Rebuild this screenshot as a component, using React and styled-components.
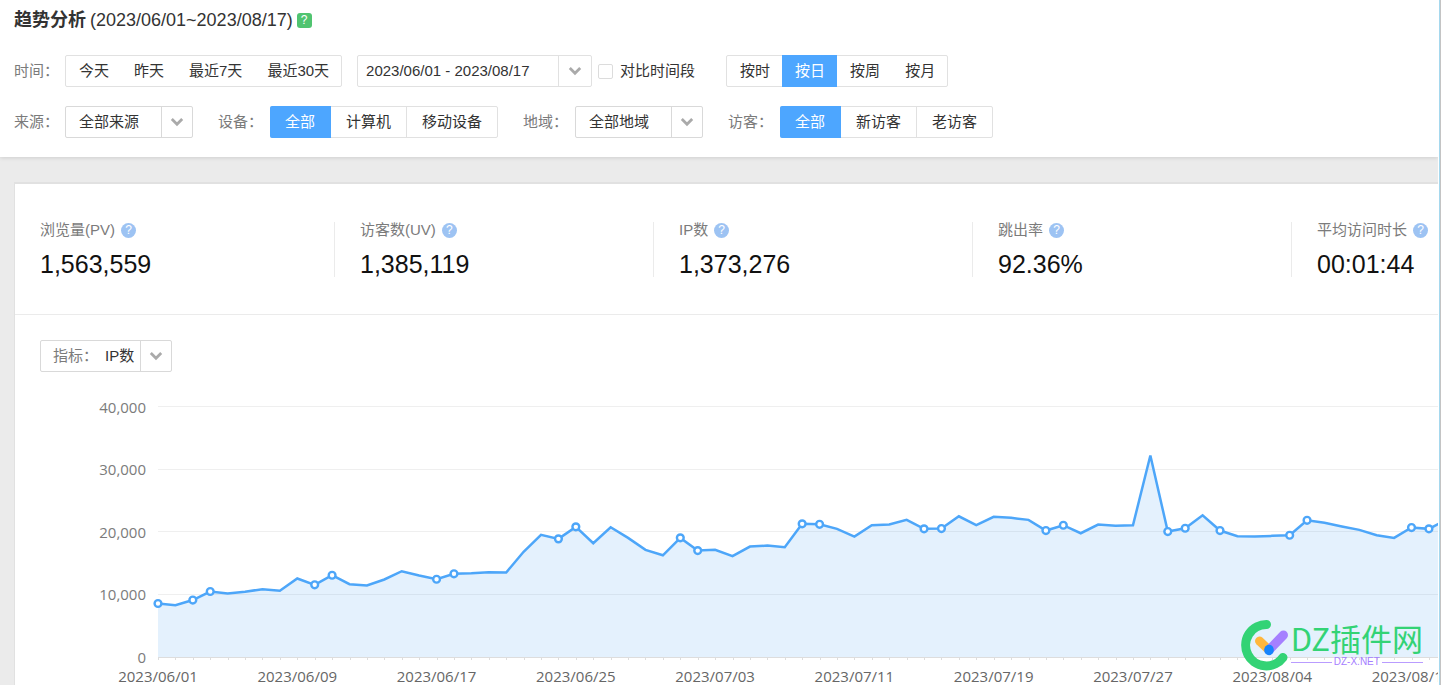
import React, { useState } from 'react';
import styled, { createGlobalStyle } from 'styled-components';

const metrics = [
  { name: '浏览量(PV)', value: '1,563,559' },
  { name: '访客数(UV)', value: '1,385,119' },
  { name: 'IP数', value: '1,373,276' },
  { name: '跳出率', value: '92.36%' },
  { name: '平均访问时长', value: '00:01:44' },
];

const ipData = [
  8545, 8270, 9100, 10460, 10140, 10430, 10830, 10570, 12540, 11530, 13060,
  11630, 11420, 12380, 13700, 13010, 12420, 13290, 13380, 13540, 13490, 16810,
  19510, 18870, 20790, 18170, 20730, 19030, 17120, 16250, 19030, 17000, 17120,
  16100, 17640, 17800, 17530, 21270, 21200, 20470, 19240, 21050, 21160, 21910,
  20470, 20520, 22480, 21050, 22390, 22230, 21910, 20200, 21050, 19770, 21160,
  20950, 21050, 32180, 20040, 20570, 22640, 20200, 19290, 19240, 19350, 19450,
  21840, 21430, 20840, 20310, 19450, 19030, 20680, 20470, 21910, 21600, 20900,
  20300,
];

const markedDays = [
  0, 2, 3, 9, 10, 16, 17, 23, 24, 30, 31, 37, 38, 44, 45, 51, 52, 58, 59, 61,
  65, 66, 72, 73,
];

const dateLabels = [
  '2023/06/01',
  '2023/06/09',
  '2023/06/17',
  '2023/06/25',
  '2023/07/03',
  '2023/07/11',
  '2023/07/19',
  '2023/07/27',
  '2023/08/04',
  '2023/08/12',
];

const ArrowIcon = () => (
  <svg width='14' height='10' viewBox='0 0 14 10' aria-hidden='true'>
    <path
      d='M1.8 2 7 7.2 12.2 2'
      fill='none'
      stroke='#aaaaaa'
      strokeWidth='2.8'
    />
  </svg>
);

const Picker = ({ id, label, options, width, inner }) => (
  <StPicker $width={width}>
    {inner && <label htmlFor={id}>{inner}</label>}
    <select id={id} aria-label={label}>
      {options.map(option => (
        <option key={option}>{option}</option>
      ))}
    </select>
    <span className='arrow'>
      <ArrowIcon />
    </span>
  </StPicker>
);

const Segments = ({ items, initial, divided }) => {
  const [selected, setSelected] = useState(initial);

  return (
    <StSegments>
      {items.map(item => (
        <StSegment
          key={item}
          type='button'
          $on={item === selected}
          $divided={divided}
          onClick={() => setSelected(item)}
        >
          {item}
        </StSegment>
      ))}
    </StSegments>
  );
};

const TrendChart = () => {
  const left = 118;
  const bottom = 265;
  const step = 17.41;
  const x = day => left + day * step;
  const y = value => bottom - (value / 10000) * 62.6;
  const end = x(ipData.length - 1);
  const line = ipData.map((value, day) => `${x(day)},${y(value)}`).join(' ');

  return (
    <StChart width='1536' height='300' role='img' aria-label='IP数'>
      {[0, 10000, 20000, 30000, 40000].map(value => (
        <g key={value}>
          <line
            className={value ? 'grid' : 'axis'}
            x1={left}
            x2={end}
            y1={Math.floor(y(value)) + 0.5}
            y2={Math.floor(y(value)) + 0.5}
          />
          <text className='value' x='106' y={y(value) + 6}>
            {value.toLocaleString('en-US')}
          </text>
        </g>
      ))}
      {ipData.map((value, day) => (
        <line
          key={day}
          className='axis'
          x1={Math.round(x(day)) + 0.5}
          x2={Math.round(x(day)) + 0.5}
          y1={bottom}
          y2={bottom + 3}
        />
      ))}
      <polygon
        className='area'
        points={`${left},${bottom} ${line} ${end},${bottom}`}
      />
      <polyline className='line' points={line} />
      {markedDays.map(day => (
        <circle key={day} cx={x(day)} cy={y(ipData[day])} r='3.4' />
      ))}
      {dateLabels.map((date, index) => (
        <text key={date} className='date' x={x(index * 8)} y='290'>
          {date}
        </text>
      ))}
    </StChart>
  );
};

const Watermark = () => (
  <StWatermark>
    <svg width='48' height='52' viewBox='0 0 48 52' aria-hidden='true'>
      <g fill='none' strokeLinecap='round'>
        <path
          d='M25.5 5.5A20.7 20.7 0 1 0 42 38.5'
          stroke='#33d375'
          strokeWidth='9'
        />
        <path d='M18.5 22 28 31' stroke='#ffb73d' strokeWidth='9' />
        <path d='M42.5 16 28 31' stroke='#a580ff' strokeWidth='9' />
        <path d='M28 30.5v1' stroke='#1684fc' strokeWidth='9.5' />
      </g>
    </svg>
    <div className='words'>
      <strong>DZ插件网</strong>
      <small>DZ-X.NET</small>
    </div>
  </StWatermark>
);

const App = () => {
  const [compare, setCompare] = useState(false);

  return (
    <StFrame>
      <GlobalStyle />
      <StPage>
        <StHeader>
          <StTitle>
            <h1>趋势分析</h1>
            <span>(2023/06/01~2023/08/17)</span>
            <StHelp type='button' $square aria-label='帮助'>
              ?
            </StHelp>
          </StTitle>
          <StFilters>
            <StLabel>时间：</StLabel>
            <Segments items={['今天', '昨天', '最近7天', '最近30天']} />
            <StDateRange type='button'>
              <span>2023/06/01 - 2023/08/17</span>
              <span className='arrow'>
                <ArrowIcon />
              </span>
            </StDateRange>
            <StCompare>
              <input
                type='checkbox'
                id='compare'
                checked={compare}
                onChange={e => setCompare(e.target.checked)}
              />
              <label htmlFor='compare'>对比时间段</label>
            </StCompare>
            <Segments items={['按时', '按日', '按周', '按月']} initial='按日' />
          </StFilters>
          <StFilters>
            <StLabel>来源：</StLabel>
            <Picker
              id='source'
              label='来源'
              options={['全部来源']}
              width={128}
            />
            <StLabel $next>设备：</StLabel>
            <Segments
              divided
              items={['全部', '计算机', '移动设备']}
              initial='全部'
            />
            <StLabel $next>地域：</StLabel>
            <Picker
              id='region'
              label='地域'
              options={['全部地域']}
              width={128}
            />
            <StLabel $next>访客：</StLabel>
            <Segments
              divided
              items={['全部', '新访客', '老访客']}
              initial='全部'
            />
          </StFilters>
        </StHeader>
        <StPanel>
          <StMetrics>
            {metrics.map(metric => (
              <StMetric key={metric.name}>
                <dt>
                  {metric.name}
                  <StHelp type='button' aria-label={metric.name}>
                    ?
                  </StHelp>
                </dt>
                <dd>{metric.value}</dd>
              </StMetric>
            ))}
          </StMetrics>
          <StTrend>
            <Picker
              id='target'
              label='指标'
              inner='指标：'
              options={['IP数']}
              width={132}
            />
            <TrendChart />
          </StTrend>
        </StPanel>
        <Watermark />
      </StPage>
    </StFrame>
  );
};

export default App;

const GlobalStyle = createGlobalStyle`
  * {
    box-sizing: border-box;
  }
  body {
    margin: 0;
    overflow: hidden;
    color: #333;
    font: 15px/20px 'Liberation Sans', 'Noto Sans CJK SC', sans-serif;
  }
  button, select, input {
    font: inherit;
    color: inherit;
  }
`;

const StFrame = styled.div`
  padding-right: 1px;
  background: #fff;
  border-right: 1px solid #c4c4c4;
`;

const StPage = styled.div`
  height: 100vh;
  position: relative;
  overflow: hidden;
  display: flex;
  flex-direction: column;
  background: #ebebeb;
  box-shadow: 1px 0 #a5d8ee;
  border-right: 1px solid #fff;
`;

const StHeader = styled.header`
  height: 157px;
  flex: none;
  padding: 8px 14px 0;
  background: #fff;
  box-shadow: 0 1px 4px rgba(0, 0, 0, 0.12);
  white-space: nowrap;
`;

const StTitle = styled.div`
  height: 24px;
  display: flex;
  align-items: center;
  gap: 4px;
  font-size: 18px;
  h1 {
    margin: 0;
    font-size: 18px;
    font-weight: bold;
  }
`;

const StHelp = styled.button`
  width: 15px;
  height: 15px;
  padding: 0;
  border: 0;
  border-radius: ${({ $square }) => ($square ? '3px' : '50%')};
  background: ${({ $square }) => ($square ? '#50c470' : '#9dc3f3')};
  color: #fff;
  font-size: 12px;
  line-height: 15px;
  cursor: pointer;
`;

const StFilters = styled.div`
  height: 32px;
  margin-top: 19px;
  display: flex;
  align-items: center;
  &:nth-child(2) {
    margin-top: 23px;
  }
`;

const StLabel = styled.span`
  width: ${({ $next }) => ($next ? '52px' : '51px')};
  margin-left: ${({ $next }) => ($next ? '25px' : '0')};
  color: #7b7b7b;
`;

const StSegments = styled.div`
  height: 32px;
  display: flex;
  border: 1px solid #e1e1e1;
  border-radius: 2px;
`;

const StSegment = styled.button`
  height: 32px;
  margin: -1px 0;
  padding: ${({ $divided }) => ($divided ? '0 15px' : '0 12px 0 13px')};
  border: 0;
  background: ${({ $on }) => ($on ? '#4da6ff' : 'transparent')};
  color: ${({ $on }) => ($on ? '#fff' : '#333')};
  cursor: pointer;
  &:first-child {
    margin-left: ${({ $divided }) => ($divided ? '-1px' : '0')};
    padding-right: ${({ $divided }) => ($divided ? '16px' : '12px')};
    border-radius: 2px 0 0 2px;
  }
  &:nth-child(n + 3) {
    border-left: ${({ $divided }) => ($divided ? '1px solid #e1e1e1' : '0')};
  }
`;

const StPicker = styled.div`
  width: ${({ $width }) => $width}px;
  height: 32px;
  display: flex;
  align-items: center;
  border: 1px solid #d9d9d9;
  border-radius: 2px;
  background: #fff;
  label {
    width: 51px;
    flex: none;
    padding-left: 12px;
    color: #7b7b7b;
    white-space: nowrap;
  }
  select {
    min-width: 0;
    height: 30px;
    flex: 1;
    padding: 0 0 0 13px;
    border: 0;
    background: transparent;
    appearance: none;
  }
  .arrow {
    width: 31px;
    height: 30px;
    display: flex;
    align-items: center;
    justify-content: center;
    border-left: 1px solid #d9d9d9;
  }
`;

const StDateRange = styled.button`
  width: 235px;
  height: 32px;
  margin-left: 15px;
  padding: 0 0 0 8px;
  display: flex;
  align-items: center;
  justify-content: space-between;
  border: 1px solid #e1e1e1;
  border-radius: 2px;
  background: #fff;
  cursor: pointer;
  .arrow {
    width: 33px;
    height: 30px;
    display: flex;
    align-items: center;
    justify-content: center;
    border-left: 1px solid #e1e1e1;
  }
`;

const StCompare = styled.div`
  margin: 0 31px 0 6px;
  display: flex;
  align-items: center;
  gap: 7px;
  input {
    width: 15px;
    height: 15px;
    margin: 0;
    appearance: none;
    border: 1px solid #dcdcdc;
    border-radius: 2px;
    background: #fff;
    &:checked {
      background: #4da6ff;
    }
  }
`;

const StPanel = styled.main`
  min-width: 1597px;
  margin: 25px 0 0 14px;
  flex: 1;
  background: #fff;
  border: 1px solid #e1e1e1;
  border-top-width: 2px;
`;

const StMetrics = styled.dl`
  height: 131px;
  margin: 0;
  padding-top: 38px;
  display: grid;
  grid-template-columns: repeat(5, 1fr);
  border-bottom: 1px solid #ebebeb;
`;

const StMetric = styled.div`
  height: 55px;
  padding-left: 25px;
  & + & {
    border-left: 1px solid #ebebeb;
  }
  dt {
    height: 16px;
    display: flex;
    align-items: center;
    gap: 6px;
    color: #7b7b7b;
  }
  dd {
    margin: 10px 0 0;
    color: #111;
    font-size: 25px;
    line-height: 32px;
  }
`;

const StTrend = styled.section`
  padding: 25px 0 0 25px;
`;

const StChart = styled.svg`
  display: block;
  margin-top: 20px;
  font-family: 'Open Sans', 'Noto Sans', sans-serif;
  font-size: 15px;
  .grid {
    stroke: #efefef;
  }
  .axis {
    stroke: #dddddd;
  }
  .area {
    fill: #4d9ff0;
    fill-opacity: 0.15;
  }
  .line {
    fill: none;
    stroke: #4da6f9;
    stroke-width: 2.5px;
  }
  circle {
    fill: #fff;
    stroke: #4da6f9;
    stroke-width: 2.4px;
  }
  .value {
    fill: #7b7b7b;
    text-anchor: end;
  }
  .date {
    fill: #666;
    text-anchor: middle;
  }
`;

const StWatermark = styled.div`
  position: absolute;
  right: 15px;
  bottom: 14px;
  display: flex;
  align-items: center;
  gap: 2px;
  .words {
    display: flex;
    flex-direction: column;
    gap: 4px;
  }
  strong {
    color: #33d375;
    font: 31px/30px 'Noto Sans CJK SC', sans-serif;
  }
  small {
    display: flex;
    align-items: center;
    gap: 2px;
    color: #a580ff;
    font-size: 10px;
    line-height: 10px;
    &::before,
    &::after {
      content: '';
      height: 1px;
      flex: 1;
      background: #b99cff;
    }
  }
`;
